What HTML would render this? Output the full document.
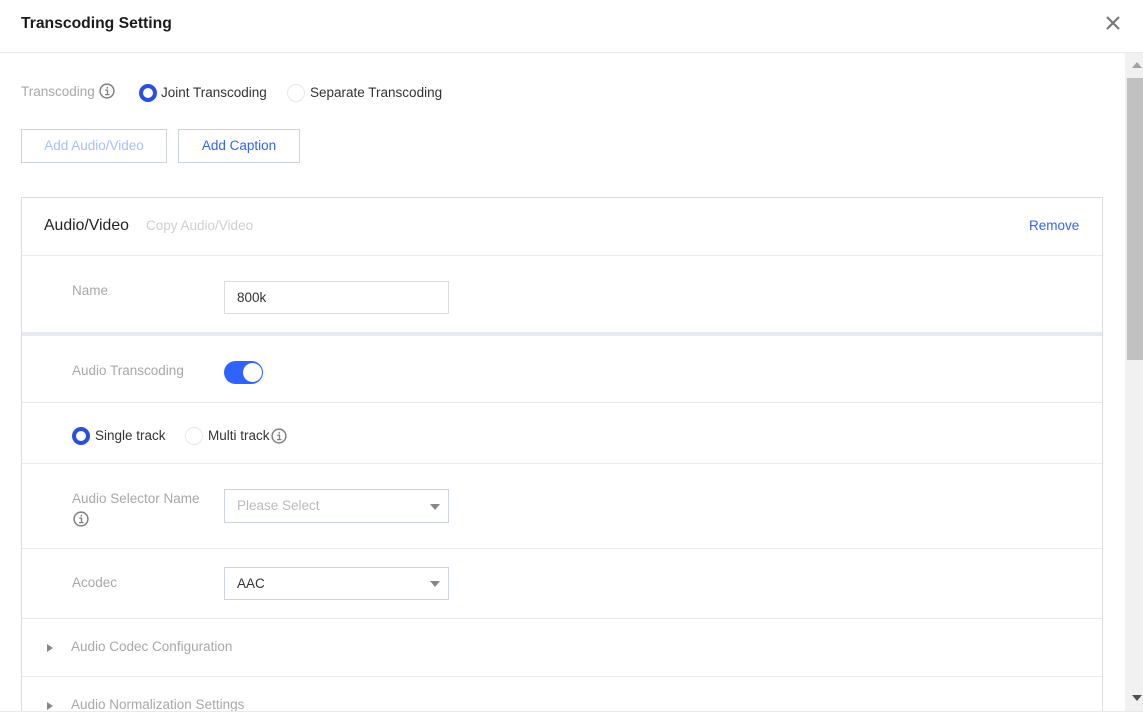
<!DOCTYPE html>
<html><head><meta charset="utf-8"><style>
html,body{margin:0;padding:0;background:#fff;width:1143px;height:719px;overflow:hidden;font-family:"Liberation Sans",sans-serif;font-size:13.5px;color:#333}
.a{position:absolute;white-space:nowrap;line-height:22px}
.b{position:absolute;box-sizing:border-box}
.l{color:#a8a8a8}
.h{position:absolute;left:22px;width:1080px;height:1px;background:#e9ebf0}
.radio{position:absolute;box-sizing:border-box;width:18px;height:18px;border-radius:50%;background:#fff}
.on{border:4.5px solid #2a4fdc}
.off{border:1px solid #e6e8ee}
.box{position:absolute;box-sizing:border-box;left:224px;width:225px;border:1px solid #cdd3e0;background:#fff}
.caret{position:absolute;left:430px;width:0;height:0;border-left:5px solid transparent;border-right:5px solid transparent;border-top:6px solid #888}
.tri{position:absolute;left:47px;width:0;height:0;border-top:4.5px solid transparent;border-bottom:4.5px solid transparent;border-left:6px solid #888}
svg{position:absolute}
</style></head><body>
<div class="a" style="left:21px;top:13px;font-weight:bold;font-size:15.7px;color:#1c1c1c">Transcoding Setting</div>
<svg style="left:1105px;top:15px" width="16" height="16" viewBox="0 0 16 16"><path d="M2 2L14 14M14 2L2 14" stroke="#787878" stroke-width="2.2" fill="none"/></svg>
<div class="b" style="left:0;top:52px;width:1143px;height:1px;background:#e8eaef"></div>

<div class="a l" style="left:21px;top:81px">Transcoding</div>
<svg style="left:99px;top:83px" width="16" height="16" viewBox="0 0 16 16"><circle cx="8" cy="8" r="6.9" stroke="#808080" stroke-width="1.5" fill="none"/><path d="M6.3 7.2H8.5V11.6M6 11.6H10.4M8.3 3.8V5.6" stroke="#808080" stroke-width="1.3" fill="none"/></svg>
<div class="radio on" style="left:139px;top:84px"></div>
<div class="a" style="left:161px;top:82px">Joint Transcoding</div>
<div class="radio off" style="left:287px;top:84px"></div>
<div class="a" style="left:310px;top:82px">Separate Transcoding</div>

<div class="b" style="left:21px;top:129px;width:146px;height:34px;border:1px solid #cdd3e0"></div>
<div class="a" style="left:21px;top:135px;width:146px;text-align:center;color:#a6c0ff">Add Audio/Video</div>
<div class="b" style="left:178px;top:129px;width:122px;height:34px;border:1px solid #cdd3e0"></div>
<div class="a" style="left:178px;top:135px;width:122px;text-align:center;color:#2f63ff">Add Caption</div>

<div class="b" style="left:21px;top:197px;width:1082px;height:515px;border:1px solid #dcdcdc;border-bottom:none"></div>
<div class="a" style="left:44px;top:215px;font-size:15.8px;color:#222">Audio/Video</div>
<div class="a" style="left:146px;top:215px;color:#cfcfcf">Copy Audio/Video</div>
<div class="a" style="left:1029px;top:215px;color:#2f63ff">Remove</div>
<div class="h" style="top:255px"></div>

<div class="a l" style="left:72px;top:280px">Name</div>
<div class="box" style="top:281px;height:33px;border-color:#dcdcdc"></div>
<div class="a" style="left:237px;top:287px">800k</div>
<div class="h" style="top:332px;height:4px;background:#e6e9ef"></div>

<div class="a l" style="left:72px;top:360px">Audio Transcoding</div>
<div class="b" style="left:224px;top:361px;width:39px;height:23px;border-radius:12px;background:#2f63ff"></div>
<div class="b" style="left:243px;top:363px;width:19px;height:19px;border-radius:50%;background:#fff"></div>
<div class="h" style="top:402px"></div>

<div class="radio on" style="left:72px;top:427px"></div>
<div class="a" style="left:95px;top:425px">Single track</div>
<div class="radio off" style="left:185px;top:427px"></div>
<div class="a" style="left:208px;top:425px">Multi track</div>
<svg style="left:271px;top:428px" width="16" height="16" viewBox="0 0 16 16"><circle cx="8" cy="8" r="6.9" stroke="#808080" stroke-width="1.5" fill="none"/><path d="M6.3 7.2H8.5V11.6M6 11.6H10.4M8.3 3.8V5.6" stroke="#808080" stroke-width="1.3" fill="none"/></svg>
<div class="h" style="top:463px"></div>

<div class="a l" style="left:72px;top:488px">Audio Selector Name</div>
<svg style="left:73px;top:511px" width="16" height="16" viewBox="0 0 16 16"><circle cx="8" cy="8" r="6.9" stroke="#808080" stroke-width="1.5" fill="none"/><path d="M6.3 7.2H8.5V11.6M6 11.6H10.4M8.3 3.8V5.6" stroke="#808080" stroke-width="1.3" fill="none"/></svg>
<div class="box" style="top:489px;height:34px"></div>
<div class="a" style="left:237px;top:495px;color:#bbb">Please Select</div>
<div class="caret" style="top:504px"></div>
<div class="h" style="top:548px"></div>

<div class="a l" style="left:72px;top:572px">Acodec</div>
<div class="box" style="top:567px;height:33px"></div>
<div class="a" style="left:237px;top:573px">AAC</div>
<div class="caret" style="top:581px"></div>
<div class="h" style="top:618px"></div>

<div class="tri" style="left:47px;top:644px"></div>
<div class="a l" style="left:71px;top:636px">Audio Codec Configuration</div>
<div class="h" style="top:676px"></div>
<div class="tri" style="left:47px;top:702px"></div>
<div class="a l" style="left:71px;top:694px">Audio Normalization Settings</div>

<div class="b" style="left:0;top:711px;width:1143px;height:8px;background:#fff;border-top:1px solid #e8eaef"></div>

<div class="b" style="left:1125px;top:53px;width:18px;height:658px;background:#f1f1f1"></div>
<div class="b" style="left:1127px;top:78px;width:16px;height:282px;background:#c1c1c1"></div>
<div class="b" style="left:1132px;top:62px;width:0;height:0;border-left:5.5px solid transparent;border-right:5.5px solid transparent;border-bottom:6px solid #a3a3a3"></div>
<div class="b" style="left:1132px;top:695px;width:0;height:0;border-left:5.5px solid transparent;border-right:5.5px solid transparent;border-top:6px solid #505050"></div>
</body></html>
